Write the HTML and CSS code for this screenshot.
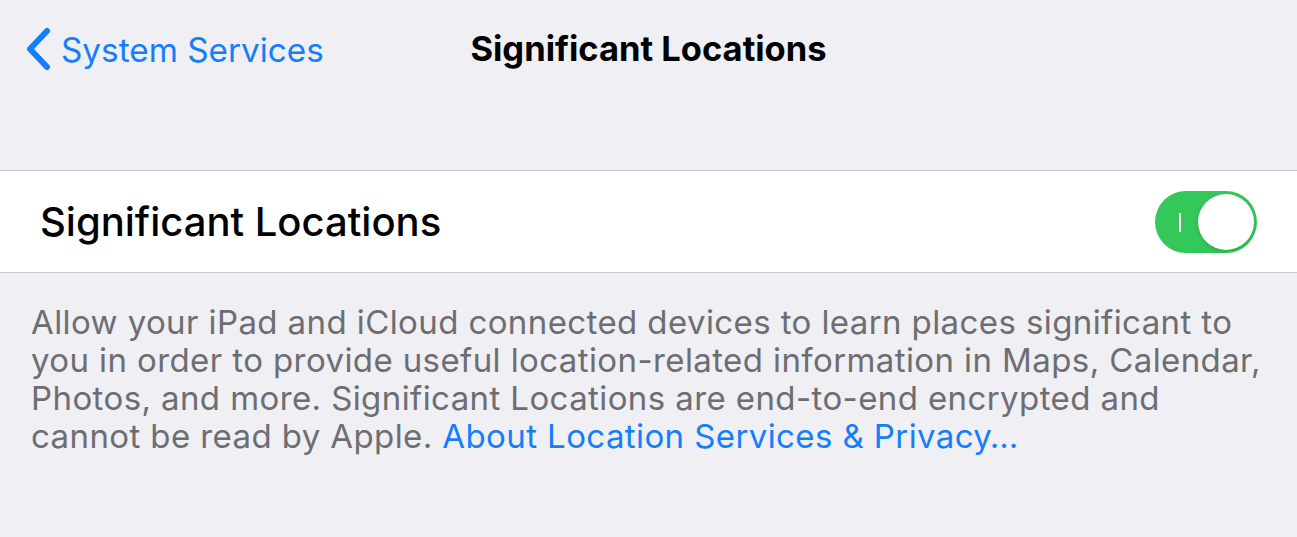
FILE: index.html
```html
<!DOCTYPE html>
<html lang="en">
<head>
<meta charset="utf-8">
<title>Significant Locations</title>
<link rel="stylesheet" href="styles.css">
</head>
<body>
<header class="navbar">
  <a class="back" href="#">
    <svg class="chevron" width="28" height="44" viewBox="0 0 28 44" aria-hidden="true">
      <path d="M22 4 L5 22 L22 40" fill="none" stroke="#147efb" stroke-width="6" stroke-linecap="round" stroke-linejoin="round"/>
    </svg>
    <span class="back-label">System Services</span>
  </a>
  <h1 class="title">Significant Locations</h1>
</header>
<section class="group">
  <div class="cell">
    <span class="cell-label">Significant Locations</span>
    <span class="switch on"><span class="switch-mark"></span><span class="knob"></span></span>
  </div>
</section>
<p class="footer">Allow your iPad and iCloud connected devices to learn places significant to you in order to provide useful location-related information in Maps, Calendar, Photos, and more. Significant Locations are end-to-end encrypted and cannot be read by Apple. <a class="link" href="#">About Location Services &amp; Privacy…</a></p>
</body>
</html>
```
FILE: styles.css
```css
* { box-sizing: border-box; }
html, body { margin: 0; padding: 0; }
body {
  background: #efeff4;
  font-family: Inter, "Noto Sans", "Liberation Sans", sans-serif;
  width: 1297px;
  height: 537px;
  overflow: hidden;
}
.navbar {
  position: relative;
  height: 100px;
  display: flex;
  align-items: flex-start;
  padding-top: 27px;
}
.back {
  display: flex;
  align-items: center;
  gap: 8px;
  margin-left: 25px;
  text-decoration: none;
  color: #147efb;
}
.chevron { display: block; }
.back-label {
  font-size: 33.3px;
  font-weight: 400;
  line-height: 44px;
  position: relative;
  top: 1px;
}
.title {
  position: absolute;
  left: 0;
  right: 0;
  top: 27px;
  margin: 0;
  text-align: center;
  font-size: 34.5px;
  font-weight: 700;
  color: #000;
  line-height: 44px;
}
.group {
  margin-top: 70px;
  background: #fff;
  border-top: 1px solid #c8c7cc;
  border-bottom: 1px solid #c8c7cc;
}
.cell {
  height: 101px;
  display: flex;
  align-items: center;
  justify-content: space-between;
  padding: 0 40px 0 40px;
}
.cell-label {
  font-size: 40px;
  font-weight: 500;
  color: #000;
}
.switch {
  position: relative;
  width: 102px;
  height: 62px;
  border-radius: 31px;
  background: #34c759;
  display: block;
}
.switch-mark {
  position: absolute;
  left: 24px;
  top: 22px;
  width: 2px;
  height: 19px;
  background: #fff;
}
.knob {
  position: absolute;
  right: 3px;
  top: 3px;
  width: 56px;
  height: 56px;
  border-radius: 50%;
  background: #fff;
  box-shadow: 0 2px 4px rgba(0,0,0,0.15);
}
.footer {
  margin: 0;
  padding: 30px 34px 0 31px;
  font-size: 33px;
  line-height: 38px;
  letter-spacing: 0.4px;
  color: #6d6d72;
}
.link {
  color: #147efb;
  text-decoration: none;
}
```
